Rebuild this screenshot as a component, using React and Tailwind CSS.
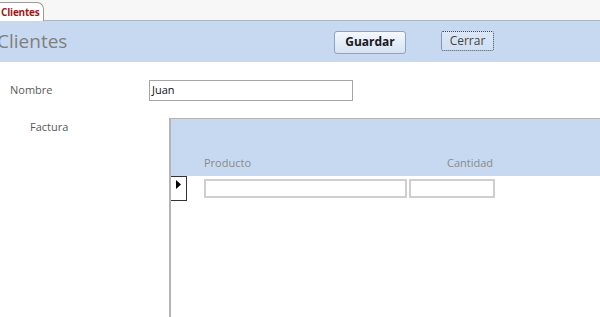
export default function App() {
  const font = { fontFamily: '"Open Sans", "Noto Sans", Arial, sans-serif' };
  return (
    <div className="w-[600px] h-[317px] overflow-hidden bg-white flex flex-col" style={font}>
      {/* tab strip */}
      <div className="h-[21px] bg-[#f7f7f7] border-b border-[#a9b6c6] flex items-end">
        <div className="relative h-[19px] w-[44px] bg-white border-t border-r border-[#9a9a9a] rounded-tr-[7px] -mb-px flex items-center">
          <span className="text-[10px] font-bold text-[#9b1b1b] leading-none pl-[1px] tracking-[-0.2px]">Clientes</span>
        </div>
      </div>

      {/* header */}
      <div className="h-[41px] bg-[#c6d9f1] flex items-center shrink-0">
        <div className="w-[337px] shrink-0 -ml-[3px]">
          <span className="text-[19px] text-[#7f7f7f] leading-none">Clientes</span>
        </div>
        <button className="h-[23px] w-[72px] mt-[1px] rounded-[3px] border border-[#8ea3bf] bg-gradient-to-b from-[#f4f8fd] to-[#d5e3f4] text-[12px] font-bold text-[#1a1a1a] flex items-center justify-center">
          Guardar
        </button>
        <button className="ml-[35px] h-[20px] w-[53px] -mt-[2px] rounded-[2px] border border-dotted border-[#3a4a60] bg-gradient-to-b from-[#dce8f6] to-[#cfdff2] text-[12px] text-[#444] flex items-center justify-center">
          Cerrar
        </button>
      </div>

      {/* Nombre */}
      <div className="flex items-center mt-[18px] h-[21px] shrink-0">
        <div className="w-[149px] pl-[10px] text-[11px] text-[#595959]">Nombre</div>
        <div className="w-[204px] h-[21px] border border-[#a6a6a6] bg-white flex items-center pl-[2px] text-[11px] text-[#111]">
          Juan
        </div>
      </div>

      {/* Factura */}
      <div className="flex flex-1 mt-[17px] min-h-0">
        <div className="w-[169px] shrink-0 pl-[30px] pt-[1px] text-[11px] text-[#595959]">Factura</div>
        <div className="flex-1 border-l-2 border-t border-[#b4b4b4] flex flex-col">
          <div className="h-[57px] bg-[#c6d9f1] flex items-end pb-[5px] text-[11px] text-[#8a8a8a]">
            <div className="w-[243px] pl-[33px]">Producto</div>
            <div className="pl-[33px]">Cantidad</div>
          </div>
          <div className="flex">
            <div className="w-[16px] h-[25px] border-t border-r border-b border-[#333] bg-white flex items-start pt-[3px] pl-[5px]">
              <svg width="5" height="9" viewBox="0 0 5 9">
                <path d="M0 0 L5 4.5 L0 9 Z" fill="#000" />
              </svg>
            </div>
            <div className="flex pt-[3px] pl-[17px] gap-[2px]">
              <div className="w-[203px] h-[19px] border-2 border-[#cfcfcf] bg-white" />
              <div className="w-[86px] h-[19px] border-2 border-[#cfcfcf] bg-white" />
            </div>
          </div>
        </div>
      </div>
    </div>
  );
}
